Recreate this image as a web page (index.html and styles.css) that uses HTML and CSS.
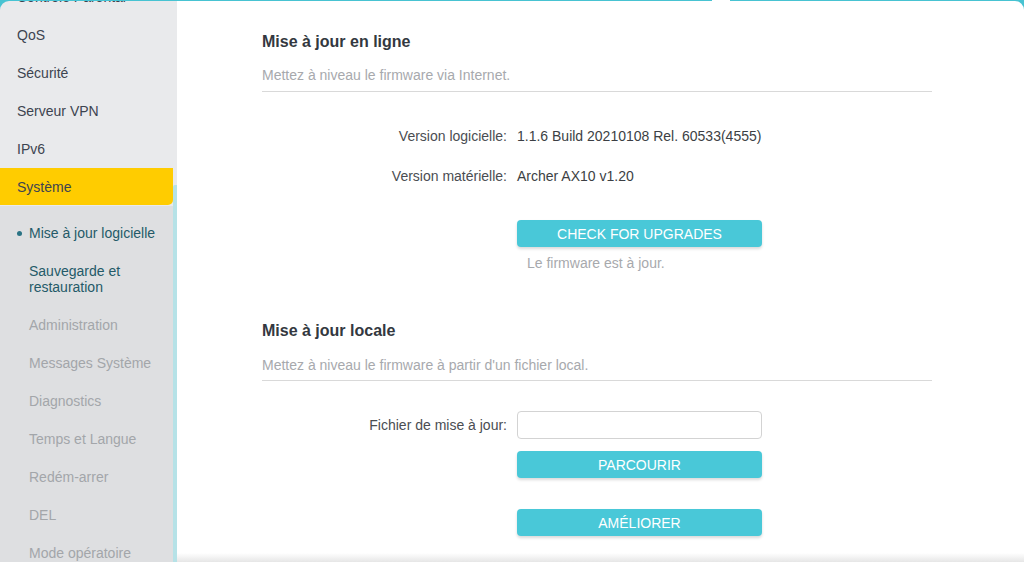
FILE: index.html
```html
<!DOCTYPE html>
<html lang="fr">
<head>
<meta charset="utf-8">
<title>Mise à jour logicielle</title>
<link rel="stylesheet" href="styles.css">
</head>
<body>
<div class="frame">
  <aside class="sidebar">
    <ul class="menu">
      <li class="menu-item">Contrôle Parental</li>
      <li class="menu-item">QoS</li>
      <li class="menu-item">Sécurité</li>
      <li class="menu-item">Serveur VPN</li>
      <li class="menu-item">IPv6</li>
      <li class="menu-item active">Système</li>
    </ul>
    <ul class="submenu">
      <li class="sub-item current">Mise à jour logicielle</li>
      <li class="sub-item dark">Sauvegarde et<br>restauration</li>
      <li class="sub-item">Administration</li>
      <li class="sub-item">Messages Système</li>
      <li class="sub-item">Diagnostics</li>
      <li class="sub-item">Temps et Langue</li>
      <li class="sub-item">Redém-arrer</li>
      <li class="sub-item">DEL</li>
      <li class="sub-item">Mode opératoire</li>
    </ul>
    <div class="scroll-thumb"></div>
  </aside>
  <main class="main">
    <div class="top-notch"></div>
    <div class="content">
      <section class="section">
        <h2 class="title">Mise à jour en ligne</h2>
        <p class="subtitle first">Mettez à niveau le firmware via Internet.</p>
        <div class="row row-first">
          <span class="label">Version logicielle:</span>
          <span class="value">1.1.6 Build 20210108 Rel. 60533(4555)</span>
        </div>
        <div class="row row-second">
          <span class="label">Version matérielle:</span>
          <span class="value">Archer AX10 v1.20</span>
        </div>
        <div class="row btn-row check-row">
          <span class="label"></span>
          <button class="btn">CHECK FOR UPGRADES</button>
        </div>
        <div class="row note-row">
          <span class="label"></span>
          <span class="note">Le firmware est à jour.</span>
        </div>
      </section>
      <section class="section second">
        <h2 class="title">Mise à jour locale</h2>
        <p class="subtitle local">Mettez à niveau le firmware à partir d'un fichier local.</p>
        <div class="row file-row">
          <span class="label">Fichier de mise à jour:</span>
          <input class="file-input" type="text">
        </div>
        <div class="row btn-row browse-row">
          <span class="label"></span>
          <button class="btn">PARCOURIR</button>
        </div>
        <div class="row btn-row upgrade-row">
          <span class="label"></span>
          <button class="btn">AMÉLIORER</button>
        </div>
      </section>
    </div>
    <div class="bottom-shade"></div>
  </main>
</div>
</body>
</html>
```

FILE: styles.css
```css
* { box-sizing: border-box; }
html, body {
  margin: 0;
  padding: 0;
  height: 100%;
}
body {
  background: #47c3d2;
  font-family: "Liberation Sans", Arial, sans-serif;
  overflow: hidden;
}
.frame {
  display: flex;
  height: 562px;
  padding-top: 1px;
}
.sidebar {
  position: relative;
  width: 177px;
  flex: none;
  background: #e9eaec;
  border-top-left-radius: 9px;
  overflow: hidden;
}
.menu, .submenu {
  list-style: none;
  margin: 0;
  padding: 0;
}
.menu { margin-top: -23px; }
.menu-item {
  height: 38px;
  line-height: 38px;
  padding-left: 17px;
  font-size: 14px;
  color: #3d4450;
}
.menu-item.active {
  background: #ffcc00;
  width: 173px;
  border-bottom-right-radius: 5px;
  height: 37px;
  line-height: 39px;
  margin-bottom: 1px;
}
.submenu {
  background: #dedfe1;
  padding-top: 8px;
  min-height: 400px;
}
.sub-item {
  position: relative;
  padding: 11px 0 11px 29px;
  line-height: 16px;
  font-size: 14px;
  color: #a3a6aa;
}
.sub-item.current, .sub-item.dark { color: #245a68; }
.sub-item.current::before {
  content: "";
  position: absolute;
  left: 17px;
  top: 17px;
  width: 5px;
  height: 5px;
  border-radius: 50%;
  background: #2a7384;
}
.scroll-thumb {
  position: absolute;
  left: 173px;
  top: 184px;
  width: 4px;
  bottom: 0;
  background: #b6e2e7;
  border-top-left-radius: 2px;
}
.main {
  position: relative;
  flex: 1;
  background: #ffffff;
  border-top-right-radius: 9px;
}
.top-notch {
  position: absolute;
  left: 535px;
  top: -1px;
  width: 18px;
  height: 2px;
  background: #ffffff;
}
.content {
  width: 755px;
  padding: 31px 0 0 85px;
}
.title {
  margin: 0;
  font-size: 16px;
  line-height: 20px;
  font-weight: bold;
  color: #333840;
}
.subtitle {
  margin: 13px 0 0;
  font-size: 14px;
  line-height: 20px;
  color: #a7a9ad;
  border-bottom: 1px solid #d9d9d9;
}
.subtitle.first { padding-bottom: 6px; }
.subtitle.local { margin-top: 14px; padding-bottom: 5px; }
.row {
  display: flex;
  align-items: center;
  gap: 10px;
  font-size: 14px;
  line-height: 20px;
  color: #4a4d52;
}
.label {
  width: 245px;
  flex: none;
  text-align: right;
}
.value { color: #3c3f44; }
.row-first { margin-top: 34px; }
.row-second { margin-top: 20px; }
.btn {
  width: 245px;
  height: 27px;
  border: none;
  border-radius: 4px;
  background: #49c8d8;
  color: #ffffff;
  font-family: "Liberation Sans", Arial, sans-serif;
  font-size: 14px;
  padding: 0;
  box-shadow: 0 2px 3px rgba(0, 0, 0, 0.15);
}
.check-row { margin-top: 34px; }
.note-row { margin-top: 6px; }
.note {
  padding-left: 10px;
  color: #a7a9ad;
  line-height: 20px;
}
.second { margin-top: 48px; }
.file-row { margin-top: 30px; }
.file-input {
  width: 245px;
  height: 28px;
  border: 1px solid #d3d3d3;
  border-radius: 4px;
  background: #ffffff;
  padding: 0 8px;
}
.browse-row { margin-top: 12px; }
.upgrade-row { margin-top: 31px; }
.bottom-shade {
  position: absolute;
  left: 0;
  right: 0;
  bottom: 0;
  height: 9px;
  background: linear-gradient(#ffffff, #e6e6e6);
}
```
